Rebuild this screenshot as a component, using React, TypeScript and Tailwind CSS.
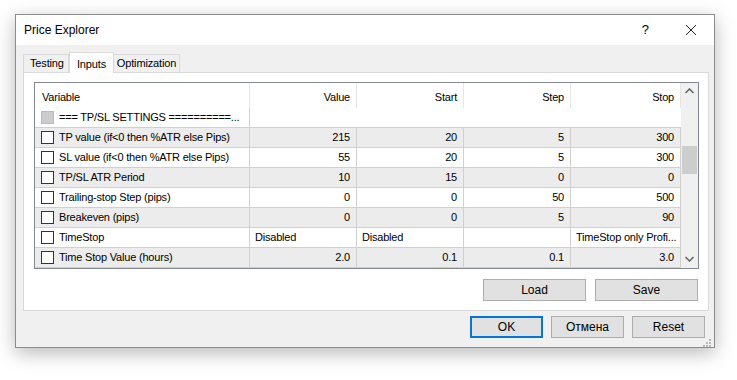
import React from "react";

type Row = {
  name: string;
  value: string;
  start: string;
  step: string;
  stop: string;
  text?: boolean;
};

const rows: Row[] = [
  { name: "TP value (if<0 then %ATR else Pips)", value: "215", start: "20", step: "5", stop: "300" },
  { name: "SL value (if<0 then %ATR else Pips)", value: "55", start: "20", step: "5", stop: "300" },
  { name: "TP/SL ATR Period", value: "10", start: "15", step: "0", stop: "0" },
  { name: "Trailing-stop Step (pips)", value: "0", start: "0", step: "50", stop: "500" },
  { name: "Breakeven (pips)", value: "0", start: "0", step: "5", stop: "90" },
  { name: "TimeStop", value: "Disabled", start: "Disabled", step: "", stop: "TimeStop only Profi...", text: true },
  { name: "Time Stop Value (hours)", value: "2.0", start: "0.1", step: "0.1", stop: "3.0" },
];

function Checkbox({ disabled }: { disabled?: boolean }) {
  return (
    <span
      className={
        "w-[13px] h-[13px] shrink-0 border " +
        (disabled ? "border-[#bcbcbc] bg-[#cccccc]" : "border-[#333333] bg-white")
      }
    />
  );
}

function Btn({ label, primary, w }: { label: string; primary?: boolean; w: string }) {
  return (
    <div
      className={
        "h-[22px] flex items-center justify-center bg-[#e1e1e1] text-[12px] text-black " +
        w +
        (primary ? " border-2 border-[#0078d7]" : " border border-[#adadad]")
      }
    >
      {label}
    </div>
  );
}

export default function App() {
  const font = { fontFamily: '"Liberation Sans", Arial, sans-serif' };
  const cols = ["w-[107px]", "w-[107px]", "w-[107px]", "w-[110px]"];

  return (
    <div className="w-[737px] h-[380px] bg-white pt-[14px] pl-[15px]" style={font}>
      <div className="w-[700px] h-[334px] border border-[#8c8c8c] bg-[#f0f0f0] flex flex-col shadow-[0_5px_18px_rgba(0,0,0,0.28)]">
        {/* title bar */}
        <div className="h-[30px] bg-white flex items-center pl-[8px] text-[12px] text-black">
          <span className="flex-1">Price Explorer</span>
          <span className="text-[13px] mr-[36px]">?</span>
          <svg width="12" height="12" viewBox="0 0 12 12" className="mr-[17px]">
            <path d="M1 1L11 11M11 1L1 11" stroke="#222" strokeWidth="1" />
          </svg>
        </div>

        {/* tabs */}
        <div className="flex items-end h-[27px] pl-[7px] text-[11px] text-black tracking-[-0.15px]">
          <div className="h-[18px] px-[6px] flex items-center border border-b-0 border-[#d9d9d9] bg-[#f0f0f0] w-[46px]">
            Testing
          </div>
          <div className="h-[21px] w-[45px] flex items-start pt-[3px] justify-center border border-b-0 border-[#d9d9d9] bg-white -mb-px relative z-10">
            Inputs
          </div>
          <div className="h-[18px] w-[66px] flex items-center justify-center border border-b-0 border-l-0 border-[#d9d9d9] bg-[#f0f0f0]">
            Optimization
          </div>
        </div>

        {/* panel */}
        <div className="ml-[7px] w-[686px] h-[240px] bg-white border border-[#d9d9d9] pt-[9px] pl-[10px] flex flex-col">
          <div className="w-[665px] h-[187px] border border-[#828790] flex text-[11px] text-black tracking-[-0.2px]">
            <div className="flex flex-col w-[646px]">
              {/* header */}
              <div className="flex h-[25px] bg-white">
                <div className="w-[215px] h-[25px] border-r border-[#e5e5e5] pl-[7px] pt-[6px]">Variable</div>
                {["Value", "Start", "Step", "Stop"].map((h, i) => (
                  <div key={h} className={cols[i] + " h-[25px] border-r border-[#e5e5e5] text-right pr-[6px] pt-[6px]"}>
                    {h}
                  </div>
                ))}
              </div>
              {/* settings row */}
              <div className="flex h-[20px] bg-white border-b border-[#d0d0d0]">
                <div className="w-[215px] border-r border-[#d0d0d0] flex items-center gap-[5px] pl-[6px]">
                  <Checkbox disabled />
                  <span>=== TP/SL SETTINGS ==========...</span>
                </div>
              </div>
              {rows.map((r, idx) => (
                <div
                  key={r.name}
                  className={"flex h-[20px] border-b border-[#d0d0d0] " + (idx % 2 === 0 ? "bg-[#ececec]" : "bg-white")}
                >
                  <div className="w-[215px] border-r border-[#d0d0d0] flex items-center gap-[5px] pl-[6px]">
                    <Checkbox />
                    <span>{r.name}</span>
                  </div>
                  {[r.value, r.start, r.step, r.stop].map((v, i) => (
                    <div
                      key={i}
                      className={
                        cols[i] +
                        " border-r border-[#d0d0d0] flex items-center whitespace-nowrap overflow-hidden " +
                        (r.text ? "pl-[5px]" : "justify-end pr-[6px]")
                      }
                    >
                      {v}
                    </div>
                  ))}
                </div>
              ))}
            </div>
            {/* scrollbar */}
            <div className="w-[17px] bg-[#f0f0f0] flex flex-col items-center">
              <div className="h-[17px] flex items-center justify-center">
                <svg width="9" height="6" viewBox="0 0 9 6">
                  <path d="M0.5 5L4.5 1L8.5 5" stroke="#606060" strokeWidth="1.5" fill="none" />
                </svg>
              </div>
              <div className="h-[46px]" />
              <div className="w-[15px] h-[28px] bg-[#cdcdcd]" />
              <div className="flex-1" />
              <div className="h-[17px] flex items-center justify-center">
                <svg width="9" height="6" viewBox="0 0 9 6">
                  <path d="M0.5 1L4.5 5L8.5 1" stroke="#606060" strokeWidth="1.5" fill="none" />
                </svg>
              </div>
            </div>
          </div>
          <div className="flex justify-end gap-[9px] pr-[10px] mt-[10px]">
            <Btn label="Load" w="w-[103px]" />
            <Btn label="Save" w="w-[103px]" />
          </div>
        </div>

        {/* bottom buttons */}
        <div className="flex justify-end gap-[8px] pr-[9px] mt-[5px]">
          <Btn label="OK" primary w="w-[73px]" />
          <Btn label="Отмена" w="w-[73px]" />
          <Btn label="Reset" w="w-[73px]" />
        </div>
        <div className="flex justify-end pr-[3px] mt-[1px]">
          <svg width="8" height="8" viewBox="0 0 8 8">
            <rect x="6" y="0" width="2" height="2" fill="#b8b8b8" />
            <rect x="3" y="3" width="2" height="2" fill="#b8b8b8" />
            <rect x="6" y="3" width="2" height="2" fill="#b8b8b8" />
            <rect x="0" y="6" width="2" height="2" fill="#b8b8b8" />
            <rect x="3" y="6" width="2" height="2" fill="#b8b8b8" />
            <rect x="6" y="6" width="2" height="2" fill="#b8b8b8" />
          </svg>
        </div>
      </div>
    </div>
  );
}
